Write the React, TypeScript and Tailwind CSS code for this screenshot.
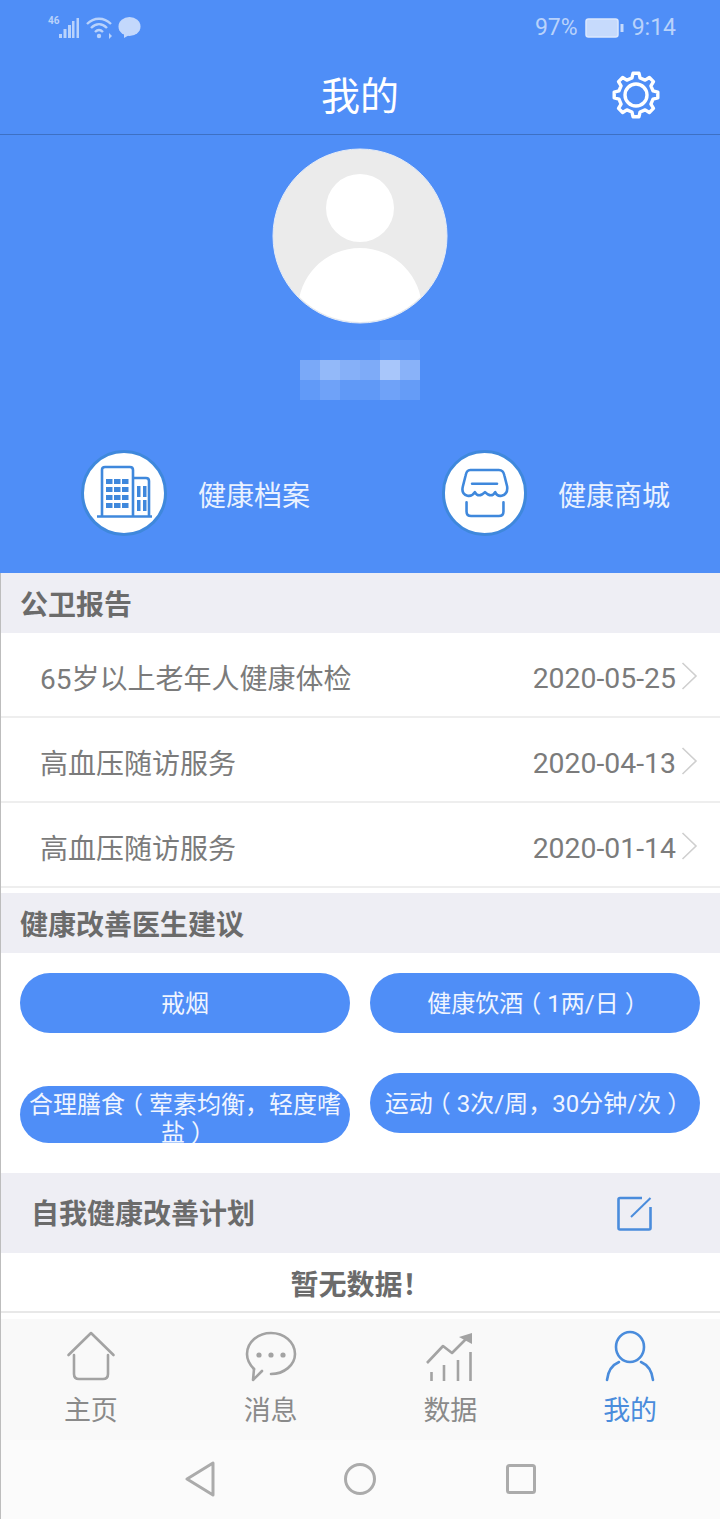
import React from "react";

const gearPath = (() => {
  const pts: string[] = [];
  const n = 8;
  for (let i = 0; i < n; i++) {
    const a = (i / n) * Math.PI * 2 - Math.PI / 2;
    const step = (Math.PI * 2) / n;
    const p = (r: number, t: number) => `${(25 + r * Math.cos(t)).toFixed(2)} ${(25 + r * Math.sin(t)).toFixed(2)}`;
    pts.push(p(17.5, a - step * 0.3), p(22, a - step * 0.17), p(22, a + step * 0.17), p(17.5, a + step * 0.3));
  }
  return "M" + pts.join("L") + "Z";
})();

const mosaic = [
  ["#4f8ef7", "#5290f7", "#5491f7", "#5592f7", "#5e98f7", "#5c96f7"],
  ["#7aa9f8", "#93b9f9", "#86b0f8", "#7eabf8", "#a8c6fa", "#89b2f9"],
  ["#619af8", "#6fa2f8", "#6099f7", "#6099f7", "#6fa2f8", "#659cf7"],
];

const Chevron = () => (
  <svg width="17" height="28" viewBox="0 0 17 28" className="ml-[5px] -mt-[6px]" fill="none" stroke="#cfcfcf" strokeWidth="1.6">
    <path d="M1.5 1 L15 14 L1.5 27" />
  </svg>
);

const L = () => <span className="ml-[-6px] mr-[6px]">（</span>;
const R = () => <span className="ml-[6px] mr-[-6px]">）</span>;

const Row = ({ title, date }: { title: string; date: string }) => (
  <div className="h-[85px] flex items-center justify-between pl-[39px] pr-[22px] pt-[10px] border-b-2 border-[#eeeeee] bg-white">
    <span className="text-[28px] text-[#7b7b7b]">{title}</span>
    <span className="flex items-center text-[28.4px] text-[#7b7b7b]">
      {date}
      <Chevron />
    </span>
  </div>
);

const Section = ({ children }: { children: React.ReactNode }) => (
  <div className="h-[60px] pl-[19px] pt-[6px] flex items-center bg-[#eeeef4] text-[28px] font-bold text-[#6b6b6b]">{children}</div>
);

const Label = ({ children, active }: { children: React.ReactNode; active?: boolean }) => (
  <span className={`text-[27px] leading-[36px] mt-[11px] ${active ? "text-[#4a8cdc]" : "text-[#8a8a8a]"}`}>{children}</span>
);

const Pill = ({ children }: { children: React.ReactNode }) => (
  <div className="w-[330px] h-[60px] pt-[2px] rounded-[30px] bg-[#4f8ef7] flex items-center justify-center text-[24px] text-[#f0f5ff]">{children}</div>
);

export default function App() {
  return (
    <div
      className="w-[720px] h-[1519px] overflow-hidden flex flex-col bg-white"
      style={{ fontFamily: "Roboto, 'Noto Sans CJK SC', sans-serif" }}
    >
      {/* Blue header */}
      <div className="h-[573px] shrink-0 bg-[#4f8ef7] flex flex-col">
        <div className="h-[54px] shrink-0 flex justify-between items-start pt-[14px] pl-[48px] pr-[44px]">
          <div className="flex items-start text-[#b9d2fb]">
            <span className="text-[10px] leading-[10px] font-bold w-[11px] mt-[2px]">46</span>
            <svg width="21" height="22" viewBox="0 0 21 22" className="mt-[3px]" fill="#b9d2fb">
              <rect x="0" y="17" width="3" height="4" />
              <rect x="4.5" y="12" width="3" height="9" />
              <rect x="9" y="8" width="3" height="13" />
              <rect x="13" y="4" width="2.5" height="17" />
              <rect x="17.5" y="1" width="2.5" height="20" />
            </svg>
            <svg width="28" height="24" viewBox="0 0 28 24" className="ml-[6px] mt-[2px]" fill="none" stroke="#b9d2fb" strokeWidth="2.4">
              <path d="M1 8 C8 1 18 1 25 8" />
              <path d="M5 12 C10 7 16 7 21 12" />
              <path d="M9 16 C11.5 13.5 14.5 13.5 17 16" />
              <circle cx="13" cy="20" r="2.2" fill="#b9d2fb" stroke="none" />
              <path d="M23 17 L26 20 L23 23 Z" fill="#b9d2fb" stroke="none" />
            </svg>
            <svg width="23" height="22" viewBox="0 0 23 22" className="ml-[4px] mt-[3px]" fill="#c3d8fc">
              <ellipse cx="11.5" cy="9.5" rx="11" ry="9.5" />
              <path d="M6 15 L6 21 L13 17 Z" />
            </svg>
          </div>
          <div className="flex items-center text-[23px] leading-[27px] text-[#b9d2fb]">
            <span>97%</span>
            <svg width="39" height="20" viewBox="0 0 39 20" className="ml-[7px]">
              <rect x="1" y="1" width="32" height="18" rx="2.5" fill="#c6dafc" stroke="#dbe7fd" strokeWidth="1.5" />
              <rect x="35.5" y="6" width="3" height="8" fill="#c6dafc" />
            </svg>
            <span className="ml-[8px]">9:14</span>
          </div>
        </div>
        <div className="h-[81px] shrink-0 relative flex items-center justify-center border-b border-[#3d70c4]">
          <span className="text-[39px] leading-[50px] text-white pt-[5px]">我的</span>
          <svg width="50" height="50" viewBox="0 0 50 50" className="absolute left-[611px] top-[16px]" fill="none" stroke="#ffffff" strokeWidth="3.4" strokeLinejoin="round">
            <path d={gearPath} />
            <circle cx="25" cy="25" r="11" />
          </svg>
        </div>
        <div className="flex flex-col items-center pt-[13px]">
          <svg width="176" height="176" viewBox="0 0 176 176">
            <defs>
              <clipPath id="av">
                <circle cx="88" cy="88" r="86" />
              </clipPath>
            </defs>
            <circle cx="88" cy="88" r="87" fill="#ebebeb" stroke="#e4ebf7" strokeWidth="1" />
            <g clipPath="url(#av)" fill="#ffffff">
              <circle cx="88" cy="60" r="34" />
              <circle cx="88" cy="162" r="62" />
            </g>
          </svg>
          <svg width="120" height="60" viewBox="0 0 120 60" className="mt-[16px]">
            {mosaic.map((r, y) => r.map((c, x) => <rect key={`${y}-${x}`} x={x * 20} y={y * 20} width="20" height="20" fill={c} />))}
          </svg>
        </div>
        <div className="flex mt-[50px] pl-[81px]">
          <div className="flex items-center w-[361px]">
            <div className="w-[86px] h-[86px] rounded-full bg-white border-[3px] border-[#3f88dc] flex items-center justify-center">
              <svg width="60" height="56" viewBox="0 0 60 56" fill="none" stroke="#3f88dc" strokeWidth="2.6">
                <path d="M8 51 V5 Q8 2 11 2 H36 Q39 2 39 5 V51" />
                <path d="M39 13 H52 Q55 13 55 16 V51" />
                <path d="M3 51.5 H58" />
                <g stroke="none" fill="#3f88dc">
                  {[14, 22, 30, 38].map((y) =>
                    [12, 20, 28].map((x) => <rect key={`${x}-${y}`} x={x} y={y} width="6.5" height="5" />),
                  )}
                  {[21, 35].map((y) => [43, 49].map((x) => <rect key={`${x}-${y}`} x={x} y={y} width="3.5" height="11" />))}
                </g>
              </svg>
            </div>
            <span className="ml-[31px] pt-[7px] text-[28px] text-[#eaf2ff]">健康档案</span>
          </div>
          <div className="flex items-center">
            <div className="w-[85px] h-[86px] rounded-full bg-white border-[3px] border-[#3f88dc] flex items-center justify-center">
              <svg width="48" height="52" viewBox="0 0 52 54" fill="none" stroke="#3f88dc" strokeWidth="2.8" strokeLinejoin="round" strokeLinecap="round">
                <path d="M10 2 H41 Q46 2 47 8 L50 20 Q51 28 44 30 Q39 31 37 26 Q33 33 26 26 Q19 33 15 26 Q12 31 7 30 Q0 28 2 20 L5 8 Q6 2 10 2 Z" />
                <path d="M12 17 H39" />
                <path d="M6 37 V47 Q6 52 11 52 H41 Q46 52 46 47 V37" />
              </svg>
            </div>
            <span className="ml-[31px] pt-[7px] text-[28px] text-[#eaf2ff]">健康商城</span>
          </div>
        </div>
      </div>

      {/* Content */}
      <div className="flex-1 flex flex-col border-l border-[#bdbdbd]">
        <Section>公卫报告</Section>
        <Row title="65岁以上老年人健康体检" date="2020-05-25" />
        <Row title="高血压随访服务" date="2020-04-13" />
        <Row title="高血压随访服务" date="2020-01-14" />
        <div className="h-[5px]" />
        <Section>健康改善医生建议</Section>
        <div className="h-[220px] bg-white pt-[20px] pl-[19px] pr-[20px] flex flex-col gap-[40px]">
          <div className="flex gap-[20px]">
            <Pill>戒烟</Pill>
            <Pill>健康饮酒<L />1两/日<R /></Pill>
          </div>
          <div className="flex gap-[20px] items-start">
            <div className="w-[330px] h-[57px] mt-[13px] rounded-[30px] overflow-hidden bg-[#4f8ef7] pt-[5px] px-[8px] text-center text-[24px] leading-[28px] text-[#f0f5ff]">
              合理膳食<L />荤素均衡，轻度嗜盐<R />
            </div>
            <Pill>运动<L />3次/周，30分钟/次<R /></Pill>
          </div>
        </div>
        <div className="h-[80px] pl-[30px] pr-[68px] flex items-center justify-between bg-[#eeeef4] text-[28px] font-bold text-[#6b6b6b]">
          <span className="pt-[4px]">自我健康改善计划</span>
          <svg width="35" height="35" viewBox="0 0 35 35" fill="none" stroke="#4a8cdc" strokeWidth="2.6">
            <path d="M25 2 H3 Q1.5 2 1.5 3.5 V32 Q1.5 33.5 3 33.5 H32 Q33.5 33.5 33.5 32 V11" />
            <path d="M14 21 L33.5 2" strokeWidth="2" />
          </svg>
        </div>
        <div className="h-[60px] pt-[8px] bg-white border-b-2 border-[#e8e8e8] flex items-center justify-center font-bold text-[#6b6b6b]">
          <span className="text-[28px]">暂无数据！</span>
        </div>
        <div className="h-[6px] bg-white" />
        {/* Tab bar */}
        <div className="h-[121px] shrink-0 bg-[#f9f9f9] grid grid-cols-4 pt-[11px]">
          <div className="flex flex-col items-center">
            <svg width="52" height="52" viewBox="0 0 52 52" fill="none" stroke="#a3a3a3" strokeWidth="2.6" strokeLinecap="round" strokeLinejoin="round">
              <path d="M3.5 25 L26 3 L48.5 25" />
              <path d="M9 25 V44 Q9 49 14 49 H38 Q43 49 43 44 V25" />
            </svg>
            <Label>主页</Label>
          </div>
          <div className="flex flex-col items-center">
            <svg width="52" height="52" viewBox="0 0 52 52" fill="none" stroke="#a3a3a3" strokeWidth="2.6" strokeLinecap="round" strokeLinejoin="round">
              <path d="M9 39 C4 34 2 29 2 24 C2 12 13 3 26 3 C39 3 50 12 50 24 C50 35 39 44 26 44" />
              <path d="M9 39 L8 50 L17 41" />
              <g fill="#a3a3a3" stroke="none">
                <circle cx="14" cy="25" r="2.6" />
                <circle cx="26" cy="25" r="2.6" />
                <circle cx="38" cy="25" r="2.6" />
              </g>
            </svg>
            <Label>消息</Label>
          </div>
          <div className="flex flex-col items-center">
            <svg width="52" height="52" viewBox="0 0 52 52" fill="none" stroke="#a3a3a3" strokeWidth="2.6">
              <path d="M3 33 L19 16 L28 23 L44 7" strokeLinejoin="round" />
              <path d="M48 3 L35 7 L48 14 Z" fill="#a3a3a3" stroke="none" />
              <path d="M7.5 51 V42 M20 51 V35 M34 51 V30 M46.5 51 V22" />
            </svg>
            <Label>数据</Label>
          </div>
          <div className="flex flex-col items-center">
            <svg width="52" height="52" viewBox="0 0 52 52" fill="none" stroke="#4a8cdc" strokeWidth="2.6" strokeLinecap="round">
              <ellipse cx="26" cy="17" rx="14" ry="15" />
              <path d="M3 50 C4 41 8 35 15 32 M49 50 C48 41 44 35 37 32" />
            </svg>
            <Label active>我的</Label>
          </div>
        </div>
        {/* Android nav */}
        <div className="h-[79px] shrink-0 bg-[#fbfbfb] flex items-center justify-center gap-[130px] pb-[1px]">
          <svg width="30" height="36" viewBox="0 0 30 36" fill="none" stroke="#ababab" strokeWidth="3" strokeLinejoin="round" className="mr-[-1px]">
            <path d="M2 18 L28 2 V34 Z" />
          </svg>
          <svg width="32" height="32" viewBox="0 0 32 32" fill="none" stroke="#ababab" strokeWidth="3">
            <circle cx="16" cy="16" r="14.5" />
          </svg>
          <svg width="30" height="30" viewBox="0 0 30 30" fill="none" stroke="#ababab" strokeWidth="3">
            <rect x="1.5" y="1.5" width="27" height="27" rx="2" />
          </svg>
        </div>
      </div>
    </div>
  );
}
